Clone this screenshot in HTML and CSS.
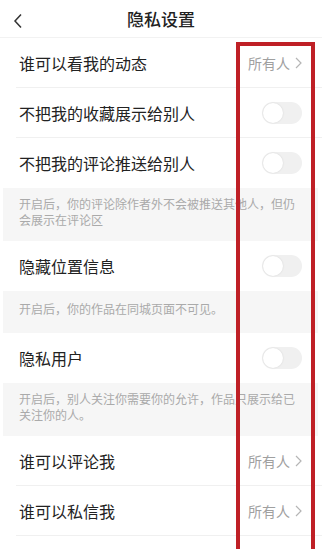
FILE: index.html
```html
<!DOCTYPE html>
<html lang="zh-CN">
<head>
  <meta charset="UTF-8" />
  <meta name="viewport" content="width=device-width, initial-scale=1.0" />
  <title>隐私设置</title>
  <link rel="stylesheet" href="styles.css">
</head>
<body>
  <!-- Header -->
  <header class="topbar">
    <span class="back">
      <svg width="10" height="16" viewBox="0 0 10 16"><path d="M8 1.5 L2 8 L8 14.5" fill="none" stroke="#333" stroke-width="1.5"/></svg>
    </span>
    <h1>隐私设置</h1>
  </header>

  <main>
    <div class="row">
      <span class="label">谁可以看我的动态</span>
      <span class="value">所有人 <svg class="chev" width="7" height="12" viewBox="0 0 7 12"><path d="M1 1 L6 6 L1 11" fill="none" stroke="#b5b5b5" stroke-width="1.2"/></svg></span>
    </div>
    <div class="row">
      <span class="label">不把我的收藏展示给别人</span>
      <span class="toggle"></span>
    </div>
    <div class="row last">
      <span class="label">不把我的评论推送给别人</span>
      <span class="toggle"></span>
    </div>
    <p class="note tall">开启后，你的评论除作者外不会被推送其他人，但仍会展示在评论区</p>

    <div class="row last">
      <span class="label">隐藏位置信息</span>
      <span class="toggle"></span>
    </div>
    <p class="note">开启后，你的作品在同城页面不可见。</p>

    <div class="row last">
      <span class="label">隐私用户</span>
      <span class="toggle"></span>
    </div>
    <p class="note tall">开启后，别人关注你需要你的允许，作品只展示给已关注你的人。</p>

    <div class="row">
      <span class="label">谁可以评论我</span>
      <span class="value">所有人 <svg class="chev" width="7" height="12" viewBox="0 0 7 12"><path d="M1 1 L6 6 L1 11" fill="none" stroke="#b5b5b5" stroke-width="1.2"/></svg></span>
    </div>
    <div class="row">
      <span class="label">谁可以私信我</span>
      <span class="value">所有人 <svg class="chev" width="7" height="12" viewBox="0 0 7 12"><path d="M1 1 L6 6 L1 11" fill="none" stroke="#b5b5b5" stroke-width="1.2"/></svg></span>
    </div>
  </main>

  <!-- annotation box -->
  <div class="mark"></div>
</body>
</html>
```

FILE: styles.css
```css
body { margin: 0; background: #fff; font-family: "Noto Sans CJK SC", "Noto Sans", sans-serif; color: #222; overflow: hidden; height: 549px; }
.topbar { height: 37px; display: flex; align-items: center; justify-content: center; position: relative; border-bottom: 1px solid #f2f2f2; }
.topbar h1 { margin: 0; font-size: 17px; font-weight: 500; color: #222; }
.back { position: absolute; left: 13px; top: 10px; }
main { padding: 0; }
.row { height: 49px; margin-left: 16px; padding-right: 18px; display: flex; align-items: center; justify-content: space-between; border-bottom: 1px solid #f0f0f0; }
.row.last { border-bottom: none; height: 50px; }
.label { font-size: 16px; margin-left: 3px; color: #222; }
.value { font-size: 14px; color: #a0a0a0; display: flex; align-items: center; gap: 5px; margin-right: 2px; }
.chev { display: block; }
.toggle { width: 40px; height: 22px; border-radius: 11px; background: #f0f0f0; position: relative; margin-right: 2px; }
.toggle::after { content: ""; position: absolute; left: 1px; top: 1px; width: 20px; height: 20px; border-radius: 50%; background: #fff; box-shadow: 0 0 2px rgba(0,0,0,0.12); }
.note { margin: 0 4px 0 3px; background: #f6f6f6; color: #aaa; font-size: 12px; line-height: 16px; padding: 10px 14px 0 16px; height: 32px; }
.note.tall { height: 45px; padding-top: 8px; }
.mark { position: absolute; left: 236px; top: 42px; width: 71px; height: 520px; border: 4px solid #bf2026; }
```
